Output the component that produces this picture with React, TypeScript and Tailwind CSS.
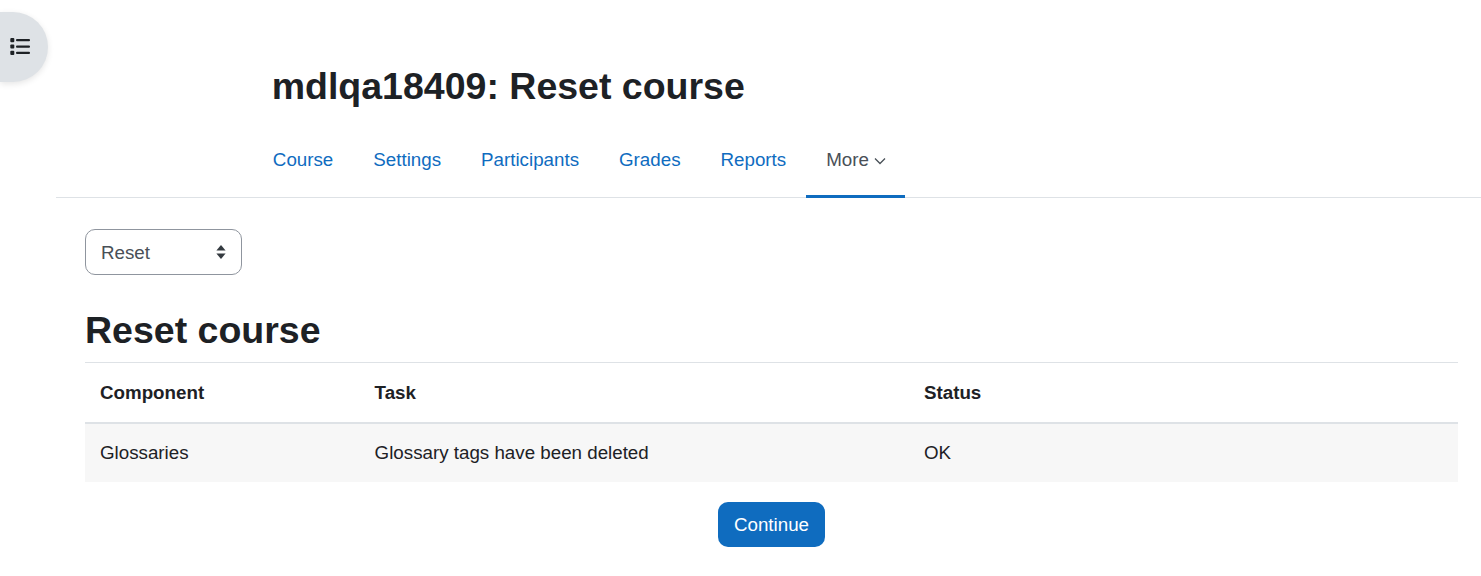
import React from "react";

function ListIcon() {
  return (
    <svg width="20" height="17" viewBox="0 0 20 17" fill="#1d2125">
      <rect x="0.3" y="0.1" width="4" height="4.2" rx="1" />
      <rect x="0.3" y="6.4" width="4" height="4.2" rx="1" />
      <rect x="0.3" y="12.7" width="4" height="4.2" rx="1" />
      <rect x="6" y="1" width="14" height="2.3" rx="1" />
      <rect x="6" y="7.4" width="14" height="2.3" rx="1" />
      <rect x="6" y="13.7" width="14" height="2.3" rx="1" />
    </svg>
  );
}

const tabs = ["Course", "Settings", "Participants", "Grades", "Reports"];

export default function App() {
  return (
    <div className="relative h-[576px] w-[1481px] overflow-hidden bg-white font-['Liberation_Sans',sans-serif] text-[18.75px] text-[#1d2125]">
      <button className="absolute left-0 top-[12px] flex h-[70px] w-[48px] items-center rounded-r-[35px] bg-[#dee2e6] pb-[1px] pl-[10px] shadow-[0_2px_6px_rgba(0,0,0,0.1)]">
        <ListIcon />
      </button>

      <div className="ml-[56px]">
        <header className="border-b border-[#dee2e6]">
          <h1 className="pl-[215.7px] pt-[64px] text-[37.5px] font-bold leading-[45px]">mdlqa18409: Reset course</h1>
          <nav className="relative -mb-px mt-[11px] flex h-[78px] pl-[196.85px]">
            {tabs.map((t) => (
              <a key={t} className="flex items-center px-5 pt-[3px] text-[#0f6cbf]">{t}</a>
            ))}
            <a className="flex w-[99px] items-center gap-[5px] border-b-[3px] border-[#0f6cbf] pl-5 pt-[6px] text-[#495057]">
              More
              <svg width="12" height="12" viewBox="0 0 12 12" fill="none" stroke="#495057" strokeWidth="1.3">
                <path d="M1 3.500l5 5 5-5" />
              </svg>
            </a>
          </nav>
        </header>

        <main className="pl-[29px] pr-[23px]">
          <div className="mt-[31px] flex h-[46px] w-[157px] items-center justify-between rounded-[10px] border border-[#8f959e] pl-[15px] pr-[15px] text-[#495057]">
            <span className="pt-[2px]">Reset</span>
            <svg width="10" height="14" viewBox="0 0 10 14" fill="#343a40">
              <path d="M5 0l4.600 5.500H.4z" />
              <path d="M5 14L.4 8.500h9.200z" />
            </svg>
          </div>

          <h2 className="mt-[33px] text-[37.5px] font-bold leading-[45px]">Reset course</h2>

          <table className="mt-[9px] w-full border-collapse">
            <thead>
              <tr className="h-[60px] border-y border-t-[#dee2e6] border-b-2 border-b-[#dee2e6] text-left">
                <th className="w-[274.6px] pl-[15px] pt-[2px] font-bold">Component</th>
                <th className="w-[549.4px] pl-[15px] pt-[2px] font-bold">Task</th>
                <th className="pl-[15px] pt-[2px] font-bold">Status</th>
              </tr>
            </thead>
            <tbody>
              <tr className="h-[59px] bg-[#f7f7f7]">
                <td className="pl-[15px] pt-[2px]">Glossaries</td>
                <td className="pl-[15px] pt-[2px]">Glossary tags have been deleted</td>
                <td className="pl-[15px] pt-[2px]">OK</td>
              </tr>
            </tbody>
          </table>

          <div className="mt-[20px] flex justify-center">
            <button className="flex h-[45px] w-[107px] items-center justify-center rounded-[10px] bg-[#0f6cbf] pt-[2px] text-white">Continue</button>
          </div>
        </main>
      </div>
    </div>
  );
}
